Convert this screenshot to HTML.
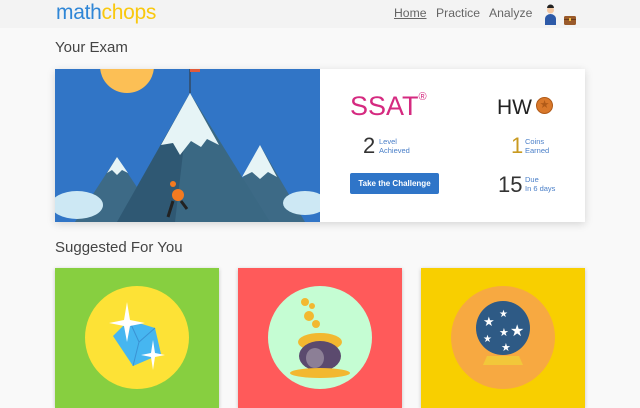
<!DOCTYPE html>
<html><head><meta charset="utf-8"><style>
*{margin:0;padding:0;box-sizing:border-box}
body{width:640px;height:400px;overflow:hidden;background:#f9f9f9;font-family:"Liberation Sans",sans-serif;position:relative}
.hdr{position:absolute;left:0;top:0;width:640px;height:28px;background:#f3f3f3}
.abs{position:absolute}
.logo{left:56px;top:1px;font-size:21px;letter-spacing:-0.3px}
.nav{top:6px;font-size:12.2px;color:#666}
h2{position:absolute;font-weight:normal;font-size:15px;color:#444}
.card{left:55px;top:69px;width:530px;height:153px;background:#fff;box-shadow:0 2px 8px rgba(0,0,0,.15)}
.big{font-size:22px;color:#333;font-weight:300}
.sm{font-size:7.5px;color:#4a7fc8;line-height:9px}
.sc{position:absolute;top:268px;width:164px;height:140px;box-shadow:0 1px 4px rgba(0,0,0,.2)}
.ov{position:absolute;left:30px;top:18px;width:104px;height:103px;border-radius:50%}
</style></head><body>
<div class="hdr"></div>
<div class="abs logo"><span style="color:#2f86d6">math</span><span style="color:#f9c80e">chops</span></div>
<div class="abs nav" style="left:394px;text-decoration:underline">Home</div>
<div class="abs nav" style="left:436px">Practice</div>
<div class="abs nav" style="left:489px">Analyze</div>
<svg class="abs" style="left:544px;top:3px" width="34" height="22"><circle cx="6.5" cy="7" r="3.5" fill="#f4c7a1"/><path d="M3 5a3.5 3.5 0 0 1 7 0z" fill="#222"/><path d="M1 22v-6a5.5 5 0 0 1 11 0v6z" fill="#2d5aa8"/><rect x="20" y="13" width="12" height="9" rx="1.5" fill="#9a5a2a"/><rect x="20" y="16" width="12" height="1" fill="#6a3a1a"/><rect x="25" y="15" width="2" height="3" fill="#f0c040"/></svg>
<h2 style="left:55px;top:39px">Your Exam</h2>
<div class="abs card">
<svg width="265" height="153" style="position:absolute;left:0;top:0">
<rect width="265" height="153" fill="#3175c6"/>
<circle cx="72" cy="-3" r="27" fill="#fcbf55"/>
<line x1="135" y1="0" x2="135" y2="24" stroke="#333" stroke-width="1"/><rect x="135" y="0" width="10" height="3" fill="#e25a3a"/>
<path d="M20 153 L62 88 L105 153z" fill="#3d6a86"/>
<path d="M52 104 L62 88 L73 104 L67 101 L62 106 L57 101z" fill="#e6f4f6"/>
<path d="M165 153 L205 76 L250 153z" fill="#3d6a86"/>
<path d="M187 108 L205 76 L222 108 L213 103 L205 110 L197 103z" fill="#e6f4f6"/>
<path d="M62 153 L135 24 L215 153z" fill="#3a6883"/>
<path d="M62 153 L135 24 L120 153z" fill="#2f5873"/>
<path d="M106 76 L135 24 L164 76 L152 70 L146 78 L136 72 L125 86 L118 74z" fill="#e6f4f6"/>
<ellipse cx="22" cy="136" rx="26" ry="14" fill="#cde8f4"/>
<ellipse cx="250" cy="134" rx="22" ry="12" fill="#cde8f4"/>
<circle cx="123" cy="126" r="6" fill="#f37a20"/><circle cx="118" cy="115" r="3" fill="#f37a20"/>
<path d="M118 132 L113 148 M126 132 L132 140" stroke="#222" stroke-width="3"/>
</svg>
<div class="abs" style="left:295px;top:22px;font-size:27px;color:#d52a80">SSAT<sup style="font-size:11px;vertical-align:top">®</sup></div>
<div class="abs" style="left:442px;top:27px;font-size:21px;color:#222">HW</div>
<div class="abs" style="left:481px;top:28px;width:17px;height:17px;border-radius:50%;background:#d9782a;border:1px solid #b05a18;color:#b05a18;font-size:11px;text-align:center;line-height:15px">★</div>
<div class="abs big" style="left:308px;top:64px">2</div>
<div class="abs sm" style="left:324px;top:68px">Level<br>Achieved</div>
<div class="abs big" style="left:456px;top:64px;color:#c99a20">1</div>
<div class="abs sm" style="left:470px;top:68px">Coins<br>Earned</div>
<div class="abs" style="left:295px;top:104px;width:89px;height:21px;background:#2f75c8;border-radius:2px;color:#fff;font-size:8px;font-weight:bold;text-align:center;line-height:21px">Take the Challenge</div>
<div class="abs big" style="left:443px;top:103px">15</div>
<div class="abs sm" style="left:470px;top:106px">Due<br>In 6 days</div>
</div>
<h2 style="left:55px;top:239px">Suggested For You</h2>
<div class="sc" style="left:55px;background:#87cf40"><div class="ov" style="background:#fde236"></div>
<svg class="abs" style="left:42px;top:28px" width="84" height="84"><path d="M16 40 L32 24 L58 32 L64 58 L36 70z" fill="#46b6f0"/><path d="M32 24 L42 46 L58 32 M42 46 L36 70" stroke="#3a93d4" fill="none"/><path d="M30 6 L33 24 L48 27 L33 30 L30 46 L27 30 L12 27 L27 24z" fill="#fff"/><path d="M56 44 L58 57 L68 59 L58 61 L56 74 L54 61 L44 59 L54 57z" fill="#fff"/></svg></div>
<div class="sc" style="left:238px;background:#ff5a5a"><div class="ov" style="background:#c5fdd3"></div>
<svg class="abs" style="left:47px;top:28px" width="70" height="84"><circle cx="20" cy="6" r="4" fill="#f2b830"/><circle cx="27" cy="10" r="3" fill="#f2b830"/><circle cx="24" cy="20" r="5" fill="#f2b830"/><circle cx="31" cy="28" r="4" fill="#f2b830"/><ellipse cx="35" cy="46" rx="22" ry="9" fill="#f2b830"/><ellipse cx="35" cy="60" rx="21" ry="15" fill="#5b4a6e"/><ellipse cx="30" cy="62" rx="9" ry="10" fill="#8c7f96"/><ellipse cx="35" cy="77" rx="30" ry="5" fill="#f2b830"/></svg></div>
<div class="sc" style="left:421px;background:#f8cf00"><div class="ov" style="background:#f7a941"></div>
<svg class="abs" style="left:52px;top:30px" width="60" height="80"><circle cx="30" cy="30" r="27" fill="#2e5a85"/><text x="10" y="28" fill="#fff" font-size="13">★</text><text x="26" y="19" fill="#fff" font-size="10">★</text><text x="26" y="38" fill="#fff" font-size="11">★</text><text x="37" y="38" fill="#fff" font-size="16">★</text><text x="10" y="44" fill="#fff" font-size="10">★</text><text x="28" y="53" fill="#fff" font-size="11">★</text><path d="M14 58 L46 58 L50 67 L10 67z" fill="#f2c73a"/></svg></div>
</body></html>
